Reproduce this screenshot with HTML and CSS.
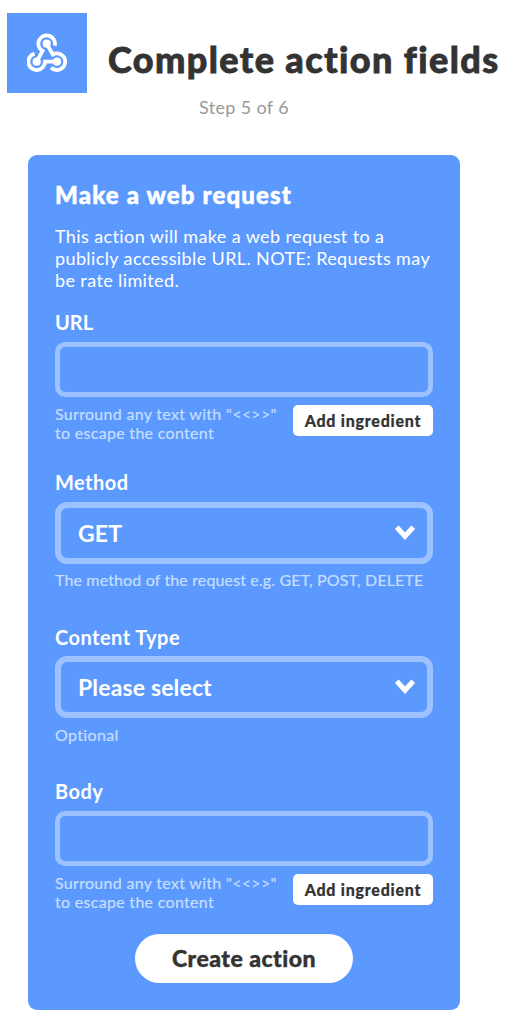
FILE: index.html
```
<!DOCTYPE html>
<html lang="en">
<head>
<meta charset="utf-8">
<title>Complete action fields</title>
<link rel="stylesheet" href="styles.css">
</head>
<body>
<header class="header">
  <div class="logo">
    <svg class="logo-icon" viewBox="0 0 40 40" fill="none" stroke="#fff" stroke-width="3.8">
      <path d="M9.7 28.7 15.5 17.9A8.3 8.3 0 1 1 27.7 12.8"/>
      <path d="M19.7 10.7 25.8 21.5A8.3 8.3 0 1 1 24.1 34.6"/>
      <path d="M30 28.7H18A8.3 8.3 0 1 1 7.6 20.7"/>
      <g fill="#fff" stroke="none"><circle cx="19.7" cy="10.7" r="4.1"/><circle cx="9.7" cy="28.7" r="4.1"/><circle cx="30" cy="28.7" r="4.1"/></g>
    </svg>
  </div>
  <h1 class="title">Complete action fields</h1>
</header>
<p class="step">Step 5 of 6</p>
<main class="card">
  <h2 class="card-title">Make a web request</h2>
  <p class="desc">This action will make a web request to a<br>publicly accessible URL. NOTE: Requests may<br>be rate limited.</p>
  <section class="field-text">
    <label class="label label-url" for="url">URL</label>
    <input class="input" id="url" type="text">
    <div class="row"><p class="help">Surround any text with "&lt;&lt;&gt;&gt;"<br>to escape the content</p><button class="add">Add ingredient</button></div>
  </section>
  <section class="field-method">
    <div class="label">Method</div>
    <div class="select"><span>GET</span><svg class="chevron" viewBox="0 0 20 16"><path d="M1.8 2.2 10 11.2 18.2 2.2" fill="none" stroke="#fff" stroke-width="5"/></svg></div>
    <p class="help">The method of the request e.g. GET, POST, DELETE</p>
  </section>
  <section class="field-type">
    <div class="label">Content Type</div>
    <div class="select"><span>Please select</span><svg class="chevron" viewBox="0 0 20 16"><path d="M1.8 2.2 10 11.2 18.2 2.2" fill="none" stroke="#fff" stroke-width="5"/></svg></div>
    <p class="help">Optional</p>
  </section>
  <section class="field-body">
    <label class="label" for="body">Body</label>
    <input class="input" id="body" type="text">
    <div class="row"><p class="help">Surround any text with "&lt;&lt;&gt;&gt;"<br>to escape the content</p><button class="add">Add ingredient</button></div>
  </section>
  <button class="create">Create action</button>
</main>
</body>
</html>
```
FILE: styles.css
```
* { box-sizing: border-box; }
body {
  margin: 0;
  background: #fff;
  color: #333;
  font-family: Lato, "Open Sans", sans-serif;
  font-variant-ligatures: none;
}
h1, h2, p { margin: 0; }
.header { display: flex; height: 96px; padding: 13px 0 0 7px; }
.logo { display: flex; align-items: center; justify-content: center; width: 80px; height: 80px; background: #5c99ff; }
.logo-icon { width: 40px; height: 40px; }
.title {
  margin: 24px 0 0 21px;
  font-size: 36px;
  font-weight: 900;
  line-height: 44px;
  letter-spacing: 1.42px;
  white-space: nowrap;
  -webkit-text-stroke: 0.8px currentColor;
}
.step { width: 488px; color: #999; font-size: 18px; line-height: 22px; letter-spacing: 0.35px; text-align: center; }
.card {
  display: flex;
  flex-direction: column;
  width: 432px;
  height: 855px;
  margin: 37px 0 0 28px;
  padding: 26px 27px 27px;
  border-radius: 9px;
  background: #5c99ff;
  color: #fff;
}
.card-title { font-size: 24px; font-weight: 900; line-height: 28px; letter-spacing: 1.15px; -webkit-text-stroke: 0.5px currentColor; }
.desc { margin: 16px 0 19px; font-size: 18px; line-height: 22px; letter-spacing: 0.39px; white-space: nowrap; }
.label { display: block; margin-bottom: 8px; font-size: 20px; font-weight: 700; line-height: 24px; letter-spacing: 0.47px; }
.label-url { letter-spacing: 0; }
.input { display: block; width: 100%; height: 55px; border: 5px solid #9dc2ff; border-radius: 10px; background: transparent; }
.row { display: flex; justify-content: space-between; align-items: flex-start; margin-top: 8px; }
.row .help { margin-top: -1px; letter-spacing: 0.3px; }
.help { color: #c6dfff; font-size: 16px; line-height: 19px; letter-spacing: 0.14px; white-space: nowrap; -webkit-text-stroke: 0.2px currentColor; }
.add {
  width: 140px;
  height: 31px;
  padding: 0;
  border: 0;
  border-radius: 5px;
  background: #fff;
  color: #333;
  font: 900 16px/31px Lato, sans-serif;
  letter-spacing: 0.75px;
  -webkit-text-stroke: 0.2px currentColor;
}
.field-text { margin-bottom: 28px; }
.field-method { margin-bottom: 36px; }
.field-type { margin-bottom: 35px; }
.field-body { margin-bottom: 23px; }
.select {
  display: flex;
  align-items: center;
  justify-content: space-between;
  height: 62px;
  padding: 0 12px 0 17px;
  border: 6px solid #9dc2ff;
  border-radius: 12px;
  font-size: 23px;
  font-weight: 700;
  letter-spacing: 0.15px;
}
.chevron { width: 20px; height: 16px; }
.field-method .help { margin-top: 6px; }
.field-type .label { margin-bottom: 7px; }
.field-type .help { margin-top: 7px; letter-spacing: 0.35px; }
.create {
  align-self: center;
  width: 218px;
  height: 49px;
  padding: 0;
  border: 0;
  border-radius: 25px;
  background: #fff;
  color: #333;
  font: 900 23px/49px Lato, sans-serif;
  letter-spacing: 0.5px;
  -webkit-text-stroke: 0.4px currentColor;
}
```
